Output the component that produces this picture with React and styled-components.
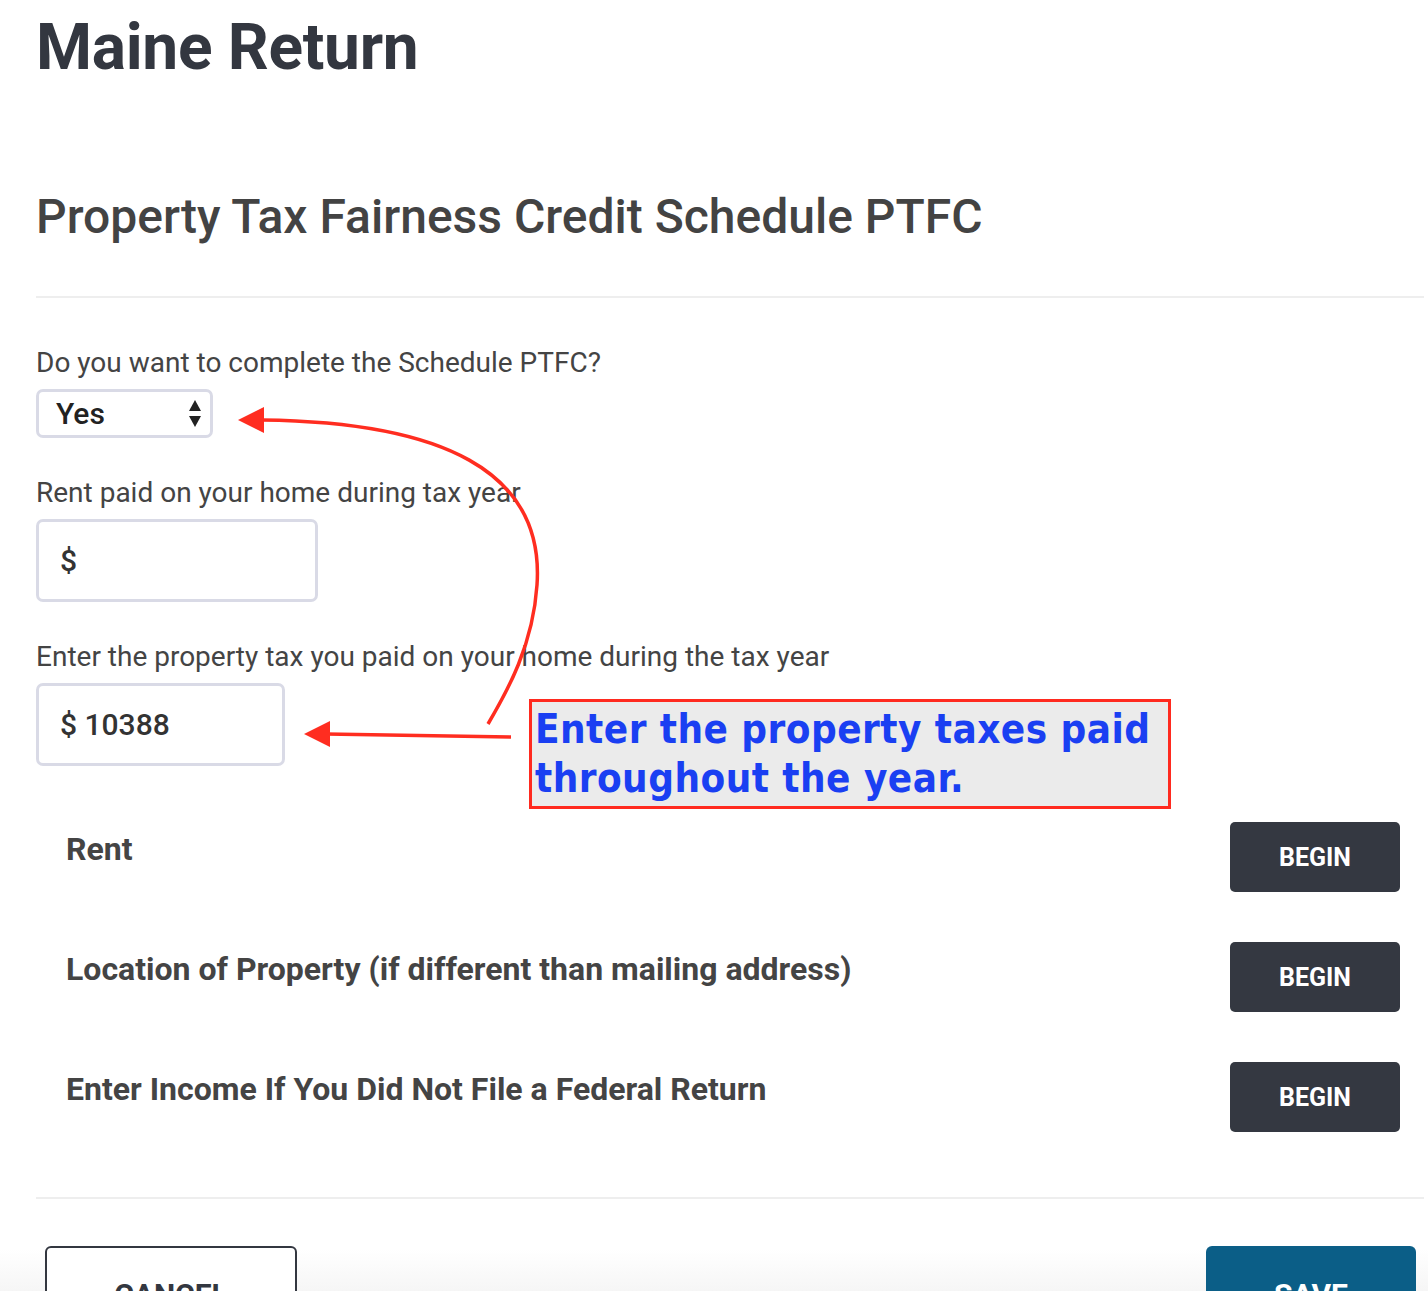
import React from "react";
import styled, { createGlobalStyle } from "styled-components";

const GlobalStyle = createGlobalStyle`
  html, body {
    margin: 0;
    padding: 0;
    background: #fff;
    overflow: hidden;
  }
  body {
    font-family: Roboto, "Liberation Sans", Arial, sans-serif;
    color: #444;
  }
  * {
    box-sizing: border-box;
  }
`;

const Page = styled.div`
  position: relative;
  height: 1291px;
  padding: 0 4px 0 36px;
  overflow: hidden;
`;

const Title = styled.h1`
  margin: 0;
  padding-top: 15px;
  font-size: 64px;
  line-height: 66px;
  font-weight: 700;
  letter-spacing: -0.3px;
  color: #333740;
`;

const Subtitle = styled.h2`
  margin: 112px 0 0;
  font-size: 48px;
  line-height: 48px;
  font-weight: 500;
  color: #434343;
`;

const Divider = styled.hr`
  margin: ${({ top }) => top}px 0 0;
  border: 0;
  height: 2px;
  background: #eeeeee;
`;

const Form = styled.div`
  display: flex;
  flex-direction: column;
  padding-top: 49px;
  gap: 39px;
`;

const Field = styled.div`
  display: flex;
  flex-direction: column;
  align-items: flex-start;
  gap: 10px;
`;

const Label = styled.label`
  font-size: 28px;
  line-height: 32px;
  color: #444;
`;

const SelectBox = styled.div`
  width: 177px;
  height: 49px;
  border: 3px solid #d9dae6;
  border-radius: 7px;
  display: flex;
  align-items: center;
  justify-content: space-between;
  padding: 0 8px 0 17px;
  font-size: 30px;
  font-weight: 500;
  color: #222;
`;

const MoneyInput = styled.div`
  width: ${({ w }) => w}px;
  height: 83px;
  border: 3px solid #d9dae6;
  border-radius: 7px;
  display: flex;
  align-items: center;
  padding-left: 21px;
  font-size: 30px;
  font-weight: 500;
  color: #333;
`;

const Sections = styled.div`
  display: flex;
  flex-direction: column;
  gap: 50px;
  margin-top: 56px;
  padding: 0 24px 0 30px;
`;

const SectionRow = styled.div`
  display: flex;
  justify-content: space-between;
  align-items: flex-start;
`;

const SectionName = styled.div`
  margin-top: 9px;
  font-size: 32px;
  line-height: 36px;
  font-weight: 700;
  color: #444;
`;

const BeginButton = styled.button`
  width: 170px;
  height: 70px;
  border: 0;
  border-radius: 5px;
  background: #343841;
  color: #fff;
  font-family: Roboto, sans-serif;
  font-size: 25px;
  font-weight: 700;
`;

const Footer = styled.div`
  margin: 0 -4px 0 -36px;
  padding: 47px 12px 0 45px;
  height: 100px;
  display: flex;
  justify-content: space-between;
  align-items: flex-start;
  background: linear-gradient(180deg, #fff 0, #fff 50px, #f4f4f4 100px);
`;

const FooterButton = styled.button`
  width: ${({ w }) => w}px;
  height: 76px;
  border-radius: 6px;
  border: ${({ primary }) => (primary ? "0" : "2px solid #333740")};
  background: ${({ primary }) => (primary ? "#0b5e87" : "#fff")};
  color: ${({ primary }) => (primary ? "#fff" : "#333740")};
  font-family: Roboto, sans-serif;
  font-size: 30px;
  font-weight: 700;
  padding-top: 22px;
`;

const Overlay = styled.svg`
  position: absolute;
  left: 0;
  top: 0;
  width: 1428px;
  height: 1291px;
  pointer-events: none;
`;

const Callout = styled.div`
  position: absolute;
  left: 529px;
  top: 699px;
  width: 642px;
  height: 110px;
  border: 3px solid #ff2a1f;
  background: #ebebeb;
  padding: 3px 0 0 3px;
  font-family: "DejaVu Sans Condensed", "DejaVu Sans", sans-serif;
  font-weight: 700;
  font-size: 40px;
  line-height: 49px;
  letter-spacing: 0.45px;
  color: #1a3ff2;
`;

const SelectArrows = () => (
  <svg width="14" height="30" viewBox="0 0 14 30">
    <path d="M7 1 L13 12 L1 12 Z" fill="#222" />
    <path d="M1 17 L13 17 L7 28 Z" fill="#222" />
  </svg>
);

const sections = [
  "Rent",
  "Location of Property (if different than mailing address)",
  "Enter Income If You Did Not File a Federal Return",
];

export default function App() {
  return (
    <>
      <GlobalStyle />
      <Page>
        <Title>Maine Return</Title>
        <Subtitle>Property Tax Fairness Credit Schedule PTFC</Subtitle>
        <Divider top={55} />
        <Form>
          <Field>
            <Label>Do you want to complete the Schedule PTFC?</Label>
            <SelectBox>
              Yes
              <SelectArrows />
            </SelectBox>
          </Field>
          <Field>
            <Label>Rent paid on your home during tax year</Label>
            <MoneyInput w={282}>$</MoneyInput>
          </Field>
          <Field>
            <Label>Enter the property tax you paid on your home during the tax year</Label>
            <MoneyInput w={249}>$ 10388</MoneyInput>
          </Field>
        </Form>
        <Sections>
          {sections.map((name) => (
            <SectionRow key={name}>
              <SectionName>{name}</SectionName>
              <BeginButton>BEGIN</BeginButton>
            </SectionRow>
          ))}
        </Sections>
        <Divider top={65} />
        <Footer>
          <FooterButton w={252}>CANCEL</FooterButton>
          <FooterButton w={210} primary>
            SAVE
          </FooterButton>
        </Footer>

        <Overlay viewBox="0 0 1428 1291">
          <path
            d="M262 420 C440 422 545 470 537 585 C533 645 508 690 488 724"
            fill="none"
            stroke="#ff2d20"
            strokeWidth="3.5"
          />
          <path d="M238 420 L264 407 L264 433 Z" fill="#ff2d20" />
          <path d="M511 737 L326 734" fill="none" stroke="#ff2d20" strokeWidth="3.5" />
          <path d="M304 734 L330 721 L330 747 Z" fill="#ff2d20" />
        </Overlay>
        <Callout>
          Enter the property taxes paid
          <br />
          throughout the year.
        </Callout>
      </Page>
    </>
  );
}
